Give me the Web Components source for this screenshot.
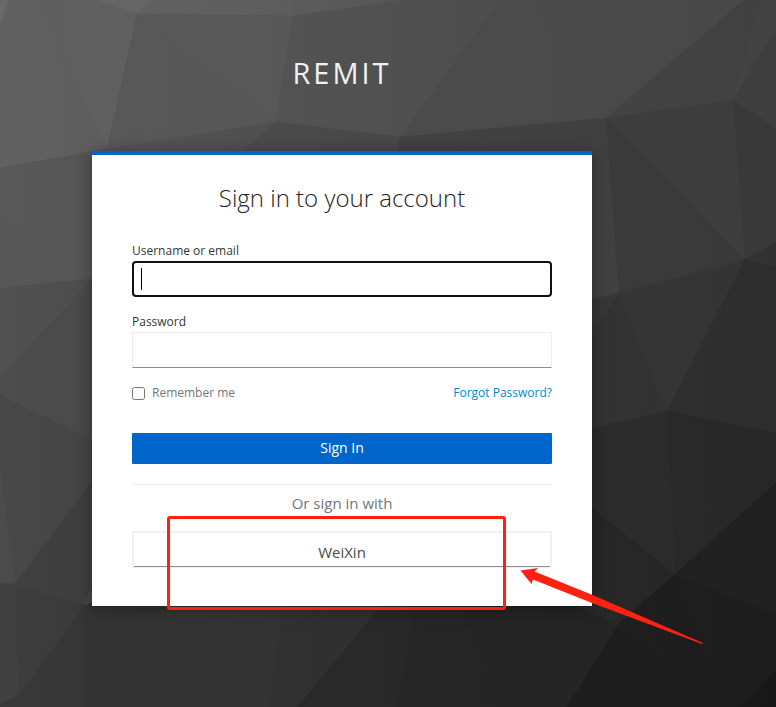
<!DOCTYPE html>
<html lang="en">
<head>
<meta charset="utf-8">
<title>Sign in to REMIT</title>
<style>
html,body{margin:0;height:100%;overflow:hidden;background:#333}
body{font-family:"Open Sans","Noto Sans",sans-serif;color:#363636}
</style>
</head>
<body>
<login-page></login-page>
<script>
const define = (name, html) => {
  const t = document.createElement('template');
  t.innerHTML = html;
  customElements.define(name, class extends HTMLElement {
    constructor() {
      super();
      this.attachShadow({mode: 'open'}).appendChild(t.content.cloneNode(true));
    }
  });
};

define('poly-backdrop', `
<style>:host{display:block;position:absolute;inset:0}svg{display:block}</style>
<svg width="776" height="707" viewBox="0 0 776 707" aria-hidden="true">
<rect width="776" height="707" fill="#474747"/>
<g id="f" stroke-width=".6"></g>
</svg>`);

define('brand-title', `
<style>:host{display:block;text-align:center;font-size:29px;line-height:38px;letter-spacing:3px;color:#f2f2f2;white-space:nowrap}</style>
<slot></slot>`);

define('login-card', `
<style>:host{display:flex;flex-direction:column;box-sizing:border-box;width:500px;height:455px;background:#fff;border-top:4px solid #06c;padding:25px 40px 0;box-shadow:0 3px 16px rgba(0,0,0,.36)}
h1{margin:0 0 1px;font-size:24px;font-weight:300;line-height:36px;text-align:center;color:#252525}</style>
<h1><slot name="title"></slot></h1><slot></slot>`);

define('text-field', `
<style>:host{display:block;margin-top:26px}
label{display:block;font-size:12px;line-height:18px;height:19px;color:#363636}
.box{box-sizing:border-box;height:36px;border:1px solid #ededed;border-bottom-color:#8a8d90;padding:7px 8px;display:flex}
:host([focused]) .box{border:2px solid #101010;border-radius:4px;padding:5px 7px}
i{display:none;width:1px;height:22px;background:#000}
:host([focused]) i{display:block}</style>
<label><slot></slot></label><div class="box" role="textbox"><i></i></div>`);

define('option-row', `
<style>:host{display:flex;align-items:center;height:18px;margin-top:16px;font-size:12px;line-height:18px;color:#72767b}
b{box-sizing:border-box;width:13px;height:13px;border:1px solid #767676;border-radius:2.5px;margin:1px 7px 0 0}
a{margin-left:auto;color:#0088ce}</style>
<b role="checkbox"></b><span><slot></slot></span><a><slot name="link"></slot></a>`);

define('primary-button', `
<style>:host{display:block;height:31px;margin-top:31px;background:#06c;border-radius:1px;color:#fff;text-align:center;font-size:14px;line-height:30px;font-weight:500}</style>
<slot></slot>`);

define('social-login', `
<style>:host{display:block;margin-top:20px;border-top:1px solid #ededed;text-align:center}
p{margin:7px 0 0;font-size:15px;line-height:22px;color:#72767b}
.btn{box-sizing:border-box;height:37px;margin-top:17px;border:2px solid #f0f0f0;border-bottom:1px solid #f0f0f0;box-shadow:inset 0 -1px #8a8d90;font-size:15px;line-height:39px;color:#4a4a4a}</style>
<p><slot name="caption"></slot></p><div class="btn"><slot></slot></div>`);

define('annotation-marks', `
<style>:host{display:block;position:absolute;inset:0;pointer-events:none}svg{display:block}</style>
<svg width="776" height="707" viewBox="0 0 776 707" aria-hidden="true">
<rect x="168.5" y="517.5" width="336" height="91" rx="1.5" fill="none" stroke="#ff2011" stroke-width="3"/>
<path d="M520.5 570.5L538 568L534.5 571.5L592 594.7L703 643L702 644L592 603L533 579.5L531.5 584Z" fill="#ff2011"/>
</svg>`);

define('login-page', `
<style>:host{display:block;position:relative;width:776px;height:707px;overflow:hidden}
main{position:relative;display:flex;flex-direction:column;width:500px;padding:54px 0 0 92px}
brand-title{margin-bottom:59px}
text-field:nth-of-type(1){margin-top:25px}
</style>
<poly-backdrop></poly-backdrop>
<main>
<brand-title>REMIT</brand-title>
<login-card><span slot="title">Sign in to your account</span>
<text-field focused>Username or email</text-field>
<text-field style="margin-top:16px">Password</text-field>
<option-row>Remember me<span slot="link">Forgot Password?</span></option-row>
<primary-button>Sign In</primary-button>
<social-login><span slot="caption">Or sign in with</span>WeiXin</social-login>
</login-card>
</main>
<annotation-marks></annotation-marks>`);

// Facets of the backdrop: grey level at the start and end (left to right), then points.
const facets = [
[0x69,0x66,'0,0 9,0 0,26'],
[0x61,0x5e,'9,0 36,0 107,149 0,168 0,26'],
[0x5f,0x60,'36,0 98,0 137,14 107,149'],
[0x65,0x65,'98,0 153,0 137,14'],
[0x61,0x5d,'153,0 292,0 293,16 137,14'],
[0x5b,0x56,'292,0 405,0 293,16'],
[0x58,0x56,'137,14 276,122 107,149'],
[0x59,0x57,'137,14 293,16 276,122'],
[0x53,0x50,'293,16 405,0 400,137 276,122'],
[0x54,0x4f,'107,149 276,122 240,153 107,160'],
[0x4b,0x47,'276,122 400,137 395,160 233,160'],
[0x50,0x4d,'405,0 500,0 400,137'],
[0x4b,0x4a,'500,0 536,0 606,118 400,137'],
[0x49,0x48,'536,0 744,0 606,118'],
[0x43,0x41,'744,0 763,0 733,100 606,118'],
[0x44,0x42,'763,0 776,0 776,28 733,100'],
[0x3f,0x3e,'776,28 776,128 733,100'],
[0x42,0x40,'400,137 606,118 619,293 580,302 580,160 395,160'],
[0x3d,0x3d,'606,118 733,100 745,259'],
[0x3a,0x39,'606,118 745,259 619,293'],
[0x39,0x38,'733,100 776,128 776,242 745,259'],
[0x34,0x32,'776,242 776,267 745,259'],
[0x37,0x37,'619,293 580,302 580,350'],
[0x33,0x32,'619,293 667,411 580,431 580,350'],
[0x35,0x34,'619,293 745,259 667,411'],
[0x2f,0x2d,'745,259 776,267 776,433 667,411'],
[0x2c,0x2b,'580,431 667,411 675,574 580,498'],
[0x29,0x27,'667,411 776,433 776,482 675,574'],
[0x27,0x26,'580,498 675,574 618,624 580,560'],
[0x21,0x20,'776,482 776,615 675,574'],
[0x1e,0x1c,'675,574 776,615 776,670 740,707 723,707'],
[0x19,0x17,'776,670 776,707 740,707'],
[0x1e,0x1c,'675,574 723,707 618,624'],
[0x1d,0x1c,'618,624 723,707 566,707'],
[0x29,0x28,'580,557 618,624 570,606'],
[0x58,0x54,'0,168 107,149 107,278 92,279 0,218'],
[0x57,0x55,'0,218 92,279 0,288'],
[0x51,0x4d,'0,288 92,279 0,377'],
[0x4d,0x49,'0,377 100,271 100,444 0,395'],
[0x48,0x44,'0,395 100,444 100,471 15,584 0,470'],
[0x4c,0x4a,'0,470 15,584 0,583'],
[0x40,0x3e,'15,584 100,471 100,560 84,606'],
[0x41,0x3f,'0,583 15,584 19,695 0,704'],
[0x3d,0x3a,'15,584 84,606 19,695'],
[0x38,0x36,'84,606 82,707 14,707 19,695'],
[0x39,0x38,'0,704 19,695 14,707 0,707'],
[0x34,0x33,'84,606 98,600 283,600 269,707 82,707'],
[0x31,0x2f,'283,600 386,600 297,707 269,707'],
[0x29,0x28,'386,600 416,600 396,707 297,707'],
[0x26,0x25,'416,600 452,600 507,707 396,707'],
[0x25,0x24,'452,600 560,600 618,624 566,707 507,707']];
const hex = v => '#' + v.toString(16).padStart(2, '0').repeat(3);
const root = document.querySelector('login-page').shadowRoot.querySelector('poly-backdrop').shadowRoot;
root.getElementById('f').innerHTML = facets.map(([a, b, p], i) =>
  `<linearGradient id="g${i}"><stop stop-color="${hex(a)}"/><stop offset="1" stop-color="${hex(b)}"/></linearGradient>` +
  `<polygon points="${p}" fill="url(#g${i})" stroke="url(#g${i})"/>`).join('');
</script>
</body>
</html>
